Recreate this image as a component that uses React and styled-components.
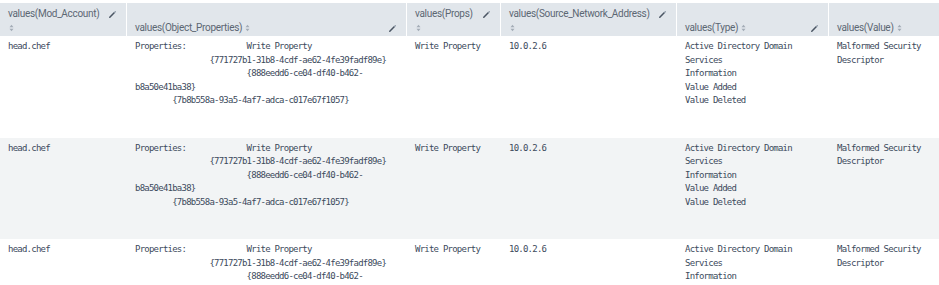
import React from "react";
import styled, { createGlobalStyle } from "styled-components";

const Global = createGlobalStyle`
  html, body { margin: 0; padding: 0; background: #ffffff; overflow: hidden; }
  body { padding-top: 3px; }
`;

const COLS = "127px 280px 94px 176px 152px 130px";

const Table = styled.div`
  width: 959px;
`;

const HeaderRow = styled.div`
  display: grid;
  grid-template-columns: ${COLS};
  height: 33px;
  background: #e1e6eb;
`;

const HeaderCell = styled.div`
  box-sizing: border-box;
  border-right: 1px solid #ffffff;
  padding: 3px 10px 0 8px;
  display: flex;
  flex-direction: column;
  justify-content: flex-end;
  font-family: Roboto, "Liberation Sans", sans-serif;
  font-size: 10px;
  letter-spacing: -0.3px;
  line-height: 14px;
  color: #5c6773;
  overflow: hidden;
`;

const HeaderInner = styled.div`
  display: flex;
  align-items: flex-start;
  gap: 9px;
`;

const Title = styled.span`
  flex: 1;
  min-width: 0;
`;

const SortWrap = styled.span`
  display: inline-block;
  margin-left: 1px;
  vertical-align: -1px;
`;

const EditWrap = styled.span`
  flex: none;
  height: 14px;
  display: flex;
  align-items: center;
`;

const BodyRow = styled.div`
  display: grid;
  grid-template-columns: ${COLS};
  min-height: 101.5px;
  background: ${(p) => (p.$alt ? "#f2f4f5" : "#ffffff")};
`;

const Cell = styled.div`
  box-sizing: border-box;
  padding: 4px 8px 3px 8px;
  font-family: "DejaVu Sans Mono", "Liberation Mono", monospace;
  font-size: 9px;
  letter-spacing: -0.77px;
  line-height: 13.5px;
  color: #3c4a5c;
  white-space: pre-wrap;
  tab-size: 8;
  overflow-wrap: normal;
  overflow: hidden;
`;

const Value = styled.div``;

const SortIcon = () => (
  <SortWrap>
    <svg width="5" height="8" viewBox="0 0 5 8">
      <path d="M0.5 3.2 L2.5 0.8 L4.5 3.2 Z" fill="#a3acb6" />
      <path d="M0.5 4.8 L2.5 7.2 L4.5 4.8 Z" fill="#a3acb6" />
    </svg>
  </SortWrap>
);

const EditIcon = () => (
  <EditWrap>
    <svg width="7" height="7" viewBox="0 0 7 7">
      <path d="M0.8 6.2 L5.2 1.8" stroke="#4a5563" strokeWidth="1.5" strokeLinecap="round" />
      <path d="M5.4 1.6 L6.3 0.7" stroke="#8a96a3" strokeWidth="1.3" strokeLinecap="round" />
    </svg>
  </EditWrap>
);

const headers = [
  { name: "Mod_Account", edit: true },
  { name: "Object_Properties", edit: true },
  { name: "Props", edit: true },
  { name: "Source_Network_Address", edit: true },
  { name: "Type", edit: true },
  { name: "Value", edit: true },
];

const objProps =
  "Properties:\t\tWrite Property\n\t\t{771727b1-31b8-4cdf-ae62-4fe39fadf89e}\n\t\t\t{888eedd6-ce04-df40-b462-b8a50e41ba38}\n\t{7b8b558a-93a5-4af7-adca-c017e67f1057}";

const row = {
  account: "head.chef",
  props: "Write Property",
  addr: "10.0.2.6",
  types: ["Active Directory Domain Services", "Information", "Value Added", "Value Deleted"],
  value: "Malformed Security Descriptor",
};

export default function App() {
  return (
    <>
      <Global />
      <Table>
        <HeaderRow>
          {headers.map((h) => (
            <HeaderCell key={h.name}>
              <HeaderInner>
                <Title>
                  values({h.name}) <SortIcon />
                </Title>
                {h.edit && <EditIcon />}
              </HeaderInner>
            </HeaderCell>
          ))}
        </HeaderRow>
        {[0, 1, 2].map((i) => (
          <BodyRow key={i} $alt={i % 2 === 1}>
            <Cell>{row.account}</Cell>
            <Cell>{objProps}</Cell>
            <Cell>{row.props}</Cell>
            <Cell>{row.addr}</Cell>
            <Cell>
              {row.types.map((t) => (
                <Value key={t}>{t}</Value>
              ))}
            </Cell>
            <Cell>{row.value}</Cell>
          </BodyRow>
        ))}
      </Table>
    </>
  );
}
